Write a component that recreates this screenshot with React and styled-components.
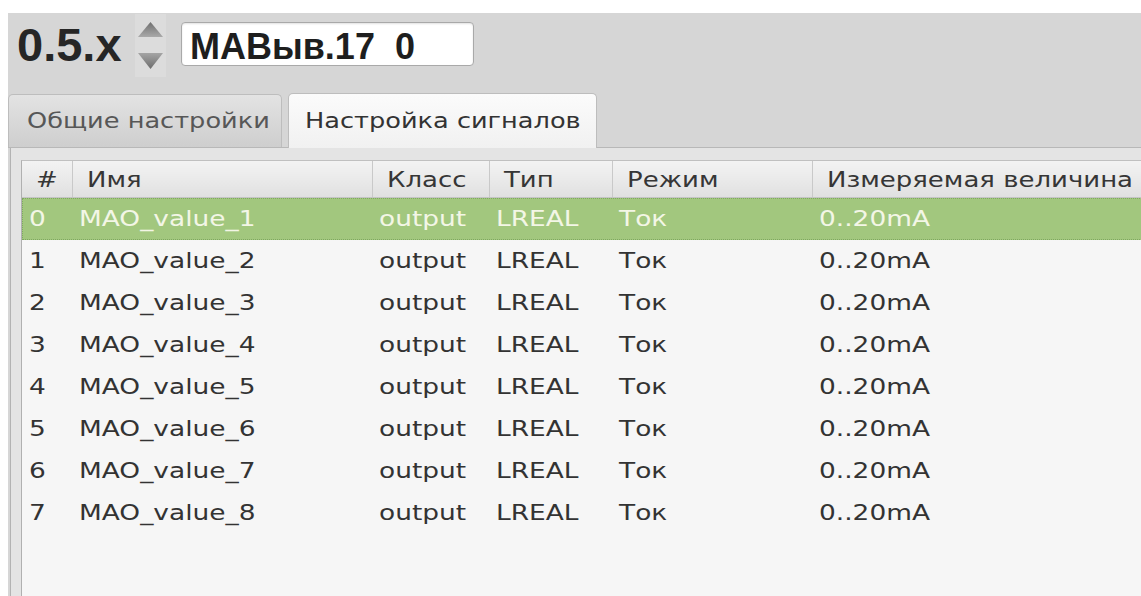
import React, { useState } from 'react'
import styled, { createGlobalStyle } from 'styled-components'

const GlobalStyle = createGlobalStyle`
  html, body {
    margin: 0;
    padding: 0;
    background: #ffffff;
    overflow: hidden;
  }
  body {
    font-family: "DejaVu Sans", "Noto Sans", sans-serif;
  }
`

const columns = [
    { key: 'idx', title: '#', width: 50, headPad: 14 },
    { key: 'name', title: 'Имя', width: 300 },
    { key: 'cls', title: 'Класс', width: 117 },
    { key: 'type', title: 'Тип', width: 123 },
    { key: 'mode', title: 'Режим', width: 200 },
    { key: 'range', title: 'Измеряемая величина', width: 340 },
]

const tabs = [
    { title: 'Общие настройки', width: 274, pad: 18 },
    { title: 'Настройка сигналов', width: 309, pad: 16 },
]

const signals = Array.from({ length: 8 }, (_, i) => ({
    idx: String(i),
    name: `MAO_value_${i + 1}`,
    cls: 'output',
    type: 'LREAL',
    mode: 'Ток',
    range: '0..20mA',
}))

const App = () => {
    const [tab, setTab] = useState(1)
    const [selected, setSelected] = useState(0)

    return (
        <>
            <GlobalStyle />
            <Window>
                <Toolbar>
                    <Version>0.5.x</Version>
                    <Spinner>
                        <svg width="31" height="63" viewBox="0 0 31 63">
                            <defs>
                                <linearGradient id="arrowUp" x1="0" y1="0" x2="0" y2="1">
                                    <stop offset="0" stopColor="#6f6f6f" />
                                    <stop offset="1" stopColor="#a9a9a9" />
                                </linearGradient>
                                <linearGradient id="arrowDown" x1="0" y1="0" x2="0" y2="1">
                                    <stop offset="0" stopColor="#a5a5a5" />
                                    <stop offset="1" stopColor="#6c6c6c" />
                                </linearGradient>
                            </defs>
                            <path d="M15.5 8 L28 23 L3 23 Z" fill="url(#arrowUp)" />
                            <path d="M3 39 L28 39 L15.5 55 Z" fill="url(#arrowDown)" />
                        </svg>
                    </Spinner>
                    <NameField>MABыв.17&nbsp;&nbsp;0</NameField>
                </Toolbar>

                <TabBar>
                    {tabs.map((t, i) => (
                        <Tab
                            key={t.title}
                            $active={tab === i}
                            $width={t.width}
                            $pad={t.pad}
                            onClick={() => setTab(i)}
                        >
                            <Wide $k={1.22}>{t.title}</Wide>
                        </Tab>
                    ))}
                </TabBar>

                <Pane>
                    <TableFrame>
                        <Table>
                            <colgroup>
                                {columns.map(c => <col key={c.key} style={{ width: c.width }} />)}
                            </colgroup>
                            <thead>
                                <tr>
                                    {columns.map(c => (
                                        <HeadCell key={c.key} $pad={c.headPad}>
                                            <Wide $k={1.18}>{c.title}</Wide>
                                        </HeadCell>
                                    ))}
                                </tr>
                            </thead>
                            <tbody>
                                {signals.map((s, i) => (
                                    <Row key={s.idx} $selected={selected === i} onClick={() => setSelected(i)}>
                                        {columns.map(c => (
                                            <Cell key={c.key}>
                                                <Wide $k={1.2}>{s[c.key]}</Wide>
                                            </Cell>
                                        ))}
                                    </Row>
                                ))}
                            </tbody>
                        </Table>
                    </TableFrame>
                </Pane>
            </Window>
        </>
    )
}

export default App

// the UI font is drawn wide, a plain scale keeps the glyph shapes
const Wide = styled.span`
  display: inline-block;
  transform: scaleX(${p => p.$k});
  transform-origin: 0 50%;
  white-space: nowrap;
`

const Window = styled.div`
  margin: 13px 0 0 8px;
  height: 583px;
  background: #d6d6d6;
  display: flex;
  flex-direction: column;
`

const Toolbar = styled.div`
  height: 79px;
  display: flex;
  align-items: flex-start;
  padding-left: 9px;
`

const Version = styled.div`
  margin-top: 8px;
  width: 118px;
  font-family: "Liberation Sans", Arial, sans-serif;
  font-weight: bold;
  font-size: 47px;
  line-height: 47px;
  color: #262626;
`

const Spinner = styled.div`
  margin-top: 1px;
  width: 31px;
  height: 63px;
  background: #dcdcdc;
`

const NameField = styled.div`
  margin: 9px 0 0 15px;
  width: 293px;
  height: 44px;
  box-sizing: border-box;
  padding: 6px 0 0 8px;
  border: 1px solid #a9a9a9;
  border-radius: 4px;
  background: #ffffff;
  box-shadow: inset 0 1px 2px rgba(0, 0, 0, 0.12);
  font-family: "Liberation Sans", Arial, sans-serif;
  font-weight: bold;
  font-size: 36px;
  line-height: 36px;
  color: #1e1e1e;
  white-space: nowrap;
`

const TabBar = styled.div`
  height: 55px;
  display: flex;
  align-items: flex-end;
  gap: 6px;
  border-bottom: 1px solid #b8b8b8;
`

const Tab = styled.div`
  width: ${p => p.$width}px;
  height: ${p => (p.$active ? '55px' : '53px')};
  padding-left: ${p => p.$pad}px;
  box-sizing: border-box;
  display: flex;
  align-items: center;
  border: 1px solid #bdbdbd;
  border-bottom: none;
  border-radius: 5px 5px 0 0;
  font-size: 21px;
  color: ${p => (p.$active ? '#333' : '#575757')};
  background: ${p => (p.$active
        ? 'linear-gradient(#fbfbfb, #f1f1f1)'
        : 'linear-gradient(#e3e3e3, #cecece)')};
  margin-bottom: ${p => (p.$active ? '-1px' : '0')};
  overflow: hidden;
  cursor: default;
`

const Pane = styled.div`
  flex: 1;
  margin-left: 2px;
  border-left: 1px solid #b3b3b3;
  background: #e4e4e4;
  padding: 12px 0 0 10px;
  display: flex;
  min-height: 0;
`

const TableFrame = styled.div`
  flex: 1;
  border-left: 1px solid #b0b0b0;
  border-top: 1px solid #c0c0c0;
  background: #f6f6f6;
  overflow: hidden;
`

const Table = styled.table`
  border-collapse: collapse;
  table-layout: fixed;
  width: 1130px;
  font-size: 22px;
`

const HeadCell = styled.th`
  height: 36px;
  padding: 0 0 0 ${p => p.$pad ?? 14}px;
  text-align: left;
  font-weight: normal;
  color: #363636;
  background: linear-gradient(#f3f3f3, #e0e0e0);
  border-right: 1px solid #c9c9c9;
  border-bottom: 1px solid #c4c4c4;
  white-space: nowrap;
  overflow: hidden;
`

const Row = styled.tr`
  height: 42px;
  background: ${p => (p.$selected ? '#a2c77e' : 'transparent')};
  color: ${p => (p.$selected ? '#f3f6e6' : '#333')};
  outline: ${p => (p.$selected ? '1px dotted #7fa860' : 'none')};
  outline-offset: -1px;
`

const Cell = styled.td`
  padding: 0 0 0 7px;
  white-space: nowrap;
  overflow: hidden;
`
